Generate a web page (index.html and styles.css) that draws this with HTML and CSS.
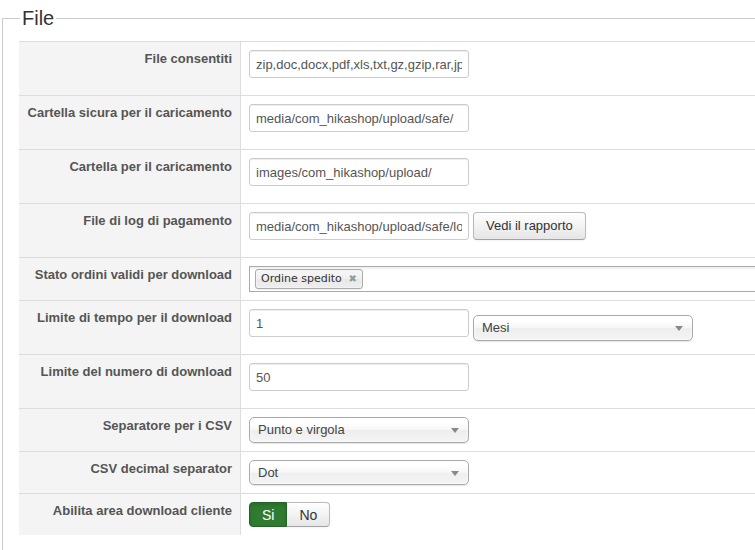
FILE: index.html
```html
<!DOCTYPE html>
<html lang="it">
<head>
    <meta charset="UTF-8">
    <meta name="viewport" content="width=device-width, initial-scale=1.0">
    <title>Configurazione - File</title>
    <link rel="stylesheet" href="styles.css">
</head>
<body>
    <fieldset class="adminform">
        <legend>File</legend>

        <table class="admintable">
            <tr>
                <td class="key">File consentiti</td>
                <td><input type="text" class="inputbox" value="zip,doc,docx,pdf,xls,txt,gz,gzip,rar,jpg,gif,png,zip,7z,tar,odt,ods"></td>
            </tr>
            <tr>
                <td class="key">Cartella sicura per il caricamento</td>
                <td><input type="text" class="inputbox" value="media/com_hikashop/upload/safe/"></td>
            </tr>
            <tr>
                <td class="key">Cartella per il caricamento</td>
                <td><input type="text" class="inputbox" value="images/com_hikashop/upload/"></td>
            </tr>
            <tr>
                <td class="key">File di log di pagamento</td>
                <td>
                    <div class="field-row">
                        <input type="text" class="inputbox" value="media/com_hikashop/upload/safe/logs/report_payment.php">
                        <button type="button" class="btn">Vedi il rapporto</button>
                    </div>
                </td>
            </tr>
            <tr>
                <td class="key">Stato ordini validi per download</td>
                <td>
                    <div class="chzn-choices">
                        <span class="search-choice">Ordine spedito<span class="search-choice-close">&#x2716;</span></span>
                    </div>
                </td>
            </tr>
            <tr>
                <td class="key">Limite di tempo per il download</td>
                <td>
                    <div class="field-row">
                        <input type="text" class="inputbox" value="1">
                        <div class="chzn-single">Mesi</div>
                    </div>
                </td>
            </tr>
            <tr>
                <td class="key">Limite del numero di download</td>
                <td><input type="text" class="inputbox" value="50"></td>
            </tr>
            <tr>
                <td class="key">Separatore per i CSV</td>
                <td><div class="chzn-single">Punto e virgola</div></td>
            </tr>
            <tr>
                <td class="key">CSV decimal separator</td>
                <td><div class="chzn-single short">Dot</div></td>
            </tr>
            <tr>
                <td class="key">Abilita area download cliente</td>
                <td>
                    <div class="btn-group">
                        <label class="btn active-yes">Si</label>
                        <label class="btn">No</label>
                    </div>
                </td>
            </tr>
        </table>
    </fieldset>
</body>
</html>
```

FILE: styles.css
```css
html {
    overflow: hidden;
}
body {
    font-family: "Liberation Sans", Arial, sans-serif;
    font-size: 13px;
    line-height: 18px;
    color: #333;
    margin: 0;
    background: #fff;
}
.adminform {
    width: 820px;
    margin: 6px 0 0 2px;
    padding: 0 16px 40px 16px;
    border: 1px solid #ccc;
}
.adminform legend {
    font-size: 20px;
    line-height: 24px;
    color: #333;
    padding: 0 2px;
    margin-left: 1px;
}
.admintable {
    width: 100%;
    margin-top: 11px;
    border-collapse: collapse;
}
.admintable td {
    padding: 8px;
    border-top: 1px solid #ddd;
    vertical-align: middle;
}
.admintable td.key {
    width: 205px;
    text-align: right;
    vertical-align: top;
    font-weight: bold;
    color: #555;
    background-color: #f4f4f4;
    border-right: 1px solid #ddd;
}
.inputbox {
    box-sizing: border-box;
    width: 220px;
    height: 28px;
    padding: 4px 6px;
    margin: 0 0 9px 0;
    font-family: inherit;
    font-size: 13px;
    color: #555;
    border: 1px solid #ccc;
    border-radius: 3px;
    box-shadow: inset 0 1px 1px rgba(0, 0, 0, 0.075);
    vertical-align: middle;
}
.field-row {
    display: flex;
    align-items: center;
    gap: 4px;
}
.btn {
    display: inline-block;
    box-sizing: border-box;
    height: 28px;
    padding: 4px 12px;
    margin-bottom: 9px;
    font-family: inherit;
    font-size: 13px;
    line-height: 18px;
    color: #333;
    background-image: linear-gradient(#fff, #e6e6e6);
    border: 1px solid #bbb;
    border-bottom-color: #a2a2a2;
    border-radius: 4px;
    box-shadow: inset 0 1px 0 rgba(255, 255, 255, 0.2), 0 1px 2px rgba(0, 0, 0, 0.05);
    cursor: pointer;
}
.chzn-single {
    position: relative;
    box-sizing: border-box;
    width: 220px;
    height: 26px;
    padding: 0 0 0 8px;
    line-height: 24px;
    color: #444;
    background-image: linear-gradient(#fff 20%, #f6f6f6 50%, #eee 52%, #f4f4f4 100%);
    border: 1px solid #aaa;
    border-radius: 5px;
    box-shadow: inset 0 0 3px #fff, 0 1px 1px rgba(0, 0, 0, 0.1);
}
.chzn-single.short {
    height: 25px;
    line-height: 23px;
}
.chzn-single::after {
    content: "";
    position: absolute;
    right: 9px;
    top: 10px;
    border-left: 4px solid transparent;
    border-right: 4px solid transparent;
    border-top: 5px solid #888;
}
.chzn-choices {
    box-sizing: border-box;
    width: 540px;
    height: 26px;
    padding: 0 5px;
    background-image: linear-gradient(#eee 1%, #fff 15%);
    border: 1px solid #aaa;
}
.search-choice {
    display: inline-block;
    position: relative;
    margin: 2px 0 0 0;
    padding: 2px 20px 2px 5px;
    font-family: "DejaVu Sans", Verdana, sans-serif;
    font-size: 11px;
    line-height: 14px;
    color: #333;
    background-image: linear-gradient(#f4f4f4 20%, #f0f0f0 50%, #e8e8e8 52%, #eee 100%);
    border: 1px solid #aaa;
    border-radius: 3px;
    box-shadow: inset 0 0 2px #fff, 0 1px 0 rgba(0, 0, 0, 0.05);
}
.search-choice-close {
    position: absolute;
    right: 5px;
    top: 3px;
    font-size: 10px;
    line-height: 12px;
    color: #999;
}
.btn-group {
    display: flex;
}
.btn-group .btn {
    height: 25px;
    padding: 3px 12px;
    margin: 0;
    font-size: 14px;
    border-radius: 0;
}
.btn-group .btn:first-child {
    border-radius: 4px 0 0 4px;
}
.btn-group .btn:last-child {
    border-left: none;
    border-radius: 0 4px 4px 0;
}
.btn-group .active-yes {
    color: #fff;
    background: #2f7c31;
    border-color: #236426;
    box-shadow: inset 0 2px 4px rgba(0, 0, 0, 0.15);
}
```
